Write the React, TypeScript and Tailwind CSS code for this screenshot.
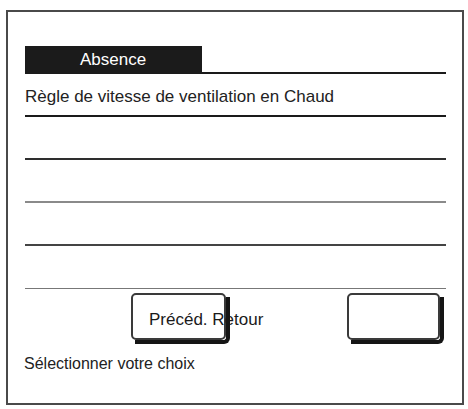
const font = { fontFamily: '"Liberation Sans", Arial, sans-serif' }

function ShadowButton({ label, className }: { label?: string; className?: string }) {
  return (
    <div
      className={`relative h-[47px] rounded-[5px] border-2 border-[#3a3a3a] bg-white ${className ?? ''}`}
    >
      {label && (
        <span className="block whitespace-nowrap pl-[16px] pt-[15px] text-[17px] leading-[20px] text-[#1a1a1a]">
          {label}
        </span>
      )}
      {/* drop shadow drawn over the overflowing label, as in the original */}
      <div className="absolute left-[2px] top-[2px] z-10 h-[calc(100%+4px)] w-[calc(100%+4px)] rounded-br-[6px] border-b-4 border-r-4 border-[#151515]" />
    </div>
  )
}

export default function App() {
  return (
    <div className="h-[409px] w-[468px] bg-white pl-[6px] pt-[10px]" style={font}>
      <div className="flex h-[395px] w-[458px] flex-col border-2 border-[#4a4a4a] pl-[17px] pr-[16px]">
        <div className="mt-[34px] flex h-[28px]">
          <div className="flex w-[177px] items-center bg-[#1b1b1b] pl-[55px] text-[17px] leading-[20px] text-white">
            Absence
          </div>
          <div className="flex-1 border-b-2 border-[#1a1a1a]" />
        </div>

        <div className="h-[43px] border-b-2 border-[#1a1a1a] pt-[13px] text-[17px] leading-[20px] text-[#222]">
          Règle de vitesse de ventilation en Chaud
        </div>
        <div className="h-[43px] border-b-2 border-[#2e2e2e]" />
        <div className="h-[43px] border-b-2 border-[#8a8a8a]" />
        <div className="h-[43px] border-b-2 border-[#444]" />
        <div className="h-[43px] border-b border-[#777]" />

        <div className="mt-[4px] flex">
          <ShadowButton label="Précéd. Retour" className="ml-[106px] w-[95px]" />
          <ShadowButton className="ml-auto mr-[6px] w-[93px]" />
        </div>

        <div className="-ml-px mt-[14px] text-[16px] leading-[20px] text-[#222]">
          Sélectionner votre choix
        </div>
      </div>
    </div>
  )
}
